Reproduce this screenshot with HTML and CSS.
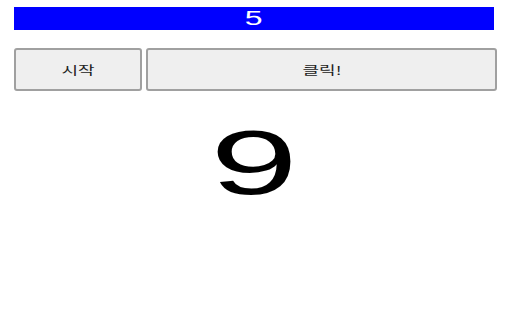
FILE: index.html
```html
<!DOCTYPE html>
<html lang="ko">
<head>
<meta charset="utf-8">
<link rel="stylesheet" href="styles.css">
</head>
<body>
<div class="page">
  <div class="bar"><span class="bar-num">5</span></div>
  <div class="buttons">
    <button class="btn btn-start"><span class="btn-label">시작</span></button>
    <button class="btn btn-click"><span class="btn-label">클릭!</span></button>
  </div>
  <div class="count"><span class="count-num">9</span></div>
</div>
</body>
</html>
```
FILE: styles.css
```css
html, body {
  margin: 0;
  padding: 0;
  background: #ffffff;
}
.page {
  width: 512px;
  height: 320px;
  padding: 7px 0 0 14px;
  box-sizing: border-box;
  font-family: "Liberation Sans", "Noto Sans CJK KR", Arial, sans-serif;
}
.bar {
  width: 480px;
  height: 23px;
  background: #0000ff;
  display: flex;
  align-items: center;
  justify-content: center;
}
.bar-num {
  display: inline-block;
  color: #ffffff;
  font-size: 20px;
  line-height: 23px;
  transform: scaleX(1.6);
}
.buttons {
  display: flex;
  gap: 4px;
  margin-top: 18px;
}
.btn {
  height: 43px;
  margin: 0;
  padding: 0;
  background: #efefef;
  border: 2px solid #a0a0a0;
  border-radius: 3px;
  font-family: "Noto Sans CJK KR", "Liberation Sans", sans-serif;
  font-size: 12px;
  color: #222;
  display: flex;
  align-items: center;
  justify-content: center;
}
.btn-start { width: 128px; }
.btn-click { width: 351px; }
.btn-label {
  display: inline-block;
  transform: scaleX(1.5);
}
.count {
  width: 480px;
  margin-top: 22px;
  display: flex;
  justify-content: center;
}
.count-num {
  display: inline-block;
  font-size: 90px;
  line-height: 100px;
  transform: scaleX(1.75);
  color: #000;
}
```
